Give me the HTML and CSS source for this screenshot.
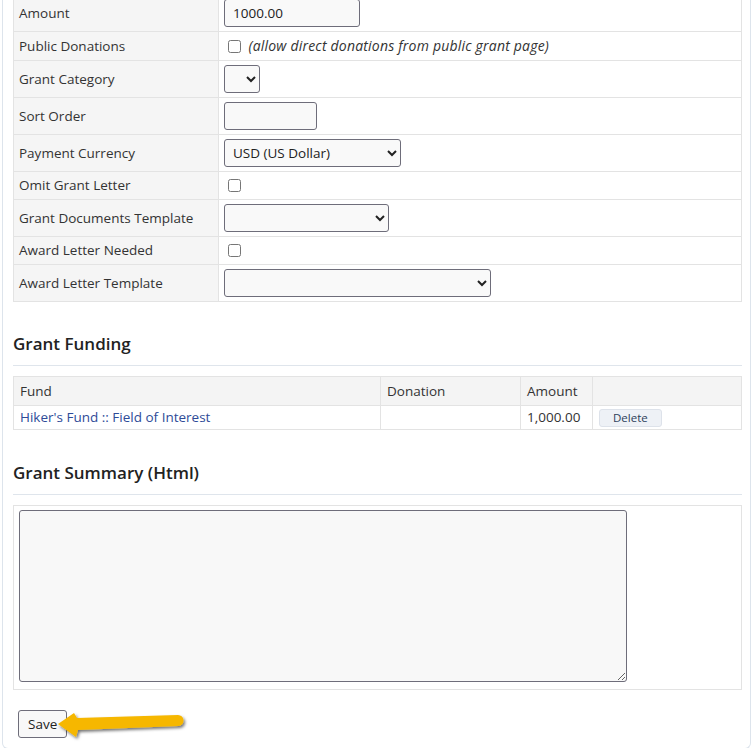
FILE: index.html
```html
<!DOCTYPE html>
<html lang="en">
<head>
    <meta charset="UTF-8">
    <meta name="viewport" content="width=device-width, initial-scale=1.0">
    <title>Edit Grant</title>
    <link rel="stylesheet" href="styles.css">
</head>
<body>
    <div class="card">
        <table class="form-table">
            <tr>
                <td class="lbl">Amount</td>
                <td><input type="text" class="inp w-amount" value="1000.00"></td>
            </tr>
            <tr>
                <td class="lbl">Public Donations</td>
                <td><input type="checkbox" class="chk"> <em class="hint">(allow direct donations from public grant page)</em></td>
            </tr>
            <tr>
                <td class="lbl">Grant Category</td>
                <td><select class="inp w-cat"><option></option></select></td>
            </tr>
            <tr>
                <td class="lbl">Sort Order</td>
                <td><input type="text" class="inp w-sort"></td>
            </tr>
            <tr>
                <td class="lbl">Payment Currency</td>
                <td><select class="inp w-cur"><option>USD (US Dollar)</option></select></td>
            </tr>
            <tr>
                <td class="lbl">Omit Grant Letter</td>
                <td><input type="checkbox" class="chk"></td>
            </tr>
            <tr>
                <td class="lbl">Grant Documents Template</td>
                <td><select class="inp w-docs"><option></option></select></td>
            </tr>
            <tr>
                <td class="lbl">Award Letter Needed</td>
                <td><input type="checkbox" class="chk"></td>
            </tr>
            <tr>
                <td class="lbl">Award Letter Template</td>
                <td><select class="inp w-award"><option></option></select></td>
            </tr>
        </table>

        <h2 class="section-title">Grant Funding</h2>
        <table class="fund-table">
            <tr>
                <th class="c-fund">Fund</th>
                <th class="c-don">Donation</th>
                <th class="c-amt">Amount</th>
                <th></th>
            </tr>
            <tr>
                <td><a href="#">Hiker's Fund :: Field of Interest</a></td>
                <td></td>
                <td>1,000.00</td>
                <td><button type="button" class="btn-small">Delete</button></td>
            </tr>
        </table>

        <h2 class="section-title second">Grant Summary (Html)</h2>
        <div class="summary-box">
            <textarea class="summary"></textarea>
        </div>

        <div class="save-row">
            <button type="button" class="btn-save">Save</button>
            <svg class="pointer" width="140" height="36" viewBox="0 0 140 36">
                <defs>
                    <filter id="shadow" x="-10%" y="-30%" width="130%" height="180%">
                        <feDropShadow dx="1.5" dy="2" stdDeviation="1.5" flood-color="#000" flood-opacity="0.55"/>
                    </filter>
                </defs>
                <path d="M8 18 L24 7 L27 12 L128 9 A5.5 5.5 0 0 1 128 20 L28 24 L26 31 Z" fill="#f6b700" filter="url(#shadow)"/>
            </svg>
        </div>
    </div>
</body>
</html>
```

FILE: styles.css
```css
body {
    margin: 0;
    font-family: "Open Sans", "Noto Sans", sans-serif;
    font-size: 13.5px;
    color: #333;
    background: #fff;
}
.card {
    margin: -6px 0 0 2px;
    padding: 0 8px 10px 10px;
    border: 1px solid #dde4ec;
    border-top: none;
    border-radius: 0 0 6px 6px;
}
table {
    border-collapse: collapse;
    width: 100%;
}
.form-table td {
    border: 1px solid #e3e3e3;
    padding: 4px 5px;
    line-height: 19px;
    vertical-align: middle;
}
.form-table td.lbl {
    width: 194px;
    background: #f5f5f5;
}
.inp {
    height: 28px;
    box-sizing: border-box;
    border: 1px solid #6e6d7a;
    border-radius: 3px;
    background: #f9f9f9;
    font-family: inherit;
    font-size: 13.5px;
    color: #222;
    padding: 0 8px;
    display: block;
}
select.inp {
    padding: 0 4px;
}
.w-amount { width: 136px; }
.w-cat { width: 36px; }
.w-sort { width: 93px; }
.w-cur { width: 177px; }
.w-docs { width: 165px; }
.w-award { width: 267px; }
.chk {
    width: 13px;
    height: 13px;
    margin: 0 4px 0 4px;
    vertical-align: -2px;
}
.hint {
    color: #333;
    font-size: 14px;
    letter-spacing: 0.2px;
}
.section-title {
    margin: 30px 0 10px;
    padding-bottom: 9px;
    font-size: 17px;
    line-height: 24px;
    font-weight: 600;
    color: #222;
    border-bottom: 1px solid #dfe5ec;
}
.section-title.second {
    margin-top: 31px;
}
.fund-table th, .fund-table td {
    border: 1px solid #e3e3e3;
    text-align: left;
    font-weight: normal;
    padding: 2px 6px;
    line-height: 19px;
}
.fund-table th {
    background: #f4f4f4;
    padding: 4px 6px;
    line-height: 20px;
}
.fund-table .c-fund { width: 354px; }
.fund-table .c-don { width: 127px; }
.fund-table .c-amt { width: 59px; }
.fund-table a {
    color: #2e4b98;
    text-decoration: none;
}
.btn-small {
    font-family: inherit;
    font-size: 11.5px;
    color: #2d3e5a;
    background: #eef1f6;
    border: 1px solid #dde2ea;
    border-radius: 3px;
    padding: 0 13px;
    height: 18px;
    line-height: 16px;
    vertical-align: middle;
}
.summary-box {
    border: 1px solid #e3e3e3;
    padding: 4px 5px 7px;
}
.summary {
    display: block;
    width: 608px;
    height: 172px;
    box-sizing: border-box;
    border: 1px solid #6e6d7a;
    border-radius: 3px;
    background: #f8f8f8;
}
.save-row {
    position: relative;
    margin-top: 20px;
    height: 28px;
}
.btn-save {
    margin-left: 5px;
    height: 28px;
    padding: 0 9px;
    font-family: inherit;
    font-size: 13.5px;
    color: #222;
    background: #f8f8f8;
    border: 1px solid #6e6d7a;
    border-radius: 3px;
}
.pointer {
    position: absolute;
    left: 37px;
    top: -4px;
}
```
